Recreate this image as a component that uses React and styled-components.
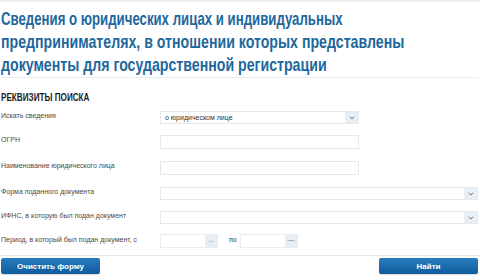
import React from "react";
import styled, { createGlobalStyle } from "styled-components";

const Global = createGlobalStyle`
  html, body { margin: 0; padding: 0; background: #fff; }
  body { width: 480px; height: 280px; overflow: hidden; font-family: "Liberation Sans", Arial, sans-serif; }
`;

const Page = styled.div`
  width: 480px;
  height: 280px;
  box-sizing: border-box;
  border-top: 2px solid #eef2f5;
  padding: 0 2px 0 1px;
  display: flex;
  flex-direction: column;
  overflow: hidden;
`;

const TitleBox = styled.div`
  padding: 5px 0 1px 0;
  border-bottom: 1px solid #e7edf1;
`;

const Condensed = styled.div`
  transform: scaleX(${(p) => p.$sx});
  transform-origin: left top;
  white-space: nowrap;
`;

const Title = styled.h1`
  margin: 0;
  font-family: "Liberation Sans", sans-serif;
  font-weight: 700;
  font-size: 19px;
  line-height: 23px;
  color: #1d679c;
`;

const Heading = styled.h2`
  margin: 13px 0 3px 0;
  font-family: "Liberation Sans", sans-serif;
  font-weight: 700;
  font-size: 11px;
  line-height: 12px;
  color: #1c1c1c;
`;

const Row = styled.div`
  display: flex;
  align-items: center;
  height: ${(p) => p.$h || 25}px;
`;

const Label = styled.div`
  width: 159px;
  flex: none;
  font-size: 7px;
  color: #4a4a4a;
  margin-top: -4px;
`;

const Field = styled.div`
  box-sizing: border-box;
  width: ${(p) => (p.$wide ? "318px" : "199px")};
  height: ${(p) => p.$h || 13}px;
  border: 1px solid #e4e9ee;
  background: #fff;
  display: flex;
  align-items: stretch;
  font-size: 7px;
  color: #333;
`;

const FieldText = styled.div`
  flex: 1;
  display: flex;
  align-items: center;
  padding-left: 4px;
`;

const ArrowBox = styled.div`
  width: 13px;
  flex: none;
  background: #e7eef4;
  display: flex;
  align-items: center;
  justify-content: center;
`;

const DateField = styled.div`
  box-sizing: border-box;
  width: 58px;
  height: 14px;
  border: 1px solid #e7ecf0;
  display: flex;
  justify-content: flex-end;
`;

const DotsBtn = styled.div`
  width: 12px;
  background: #e6edf3;
  color: #7a8a99;
  font-size: 7px;
  line-height: 10px;
  text-align: center;
  letter-spacing: -0.5px;
`;

const Po = styled.span`
  font-size: 7px;
  color: #333;
  margin: -4px 3px 0 11px;
`;

const Divider = styled.div`
  border-top: 1px solid #e3e8ec;
  margin: 2px -2px 0 -1px;
`;

const Buttons = styled.div`
  display: flex;
  justify-content: space-between;
  margin-top: 2px;
`;

const Button = styled.div`
  width: 99px;
  height: 16px;
  border-radius: 2px;
  background: linear-gradient(#2a7dc0, #0f5b9c);
  color: #fff;
  font-weight: 700;
  font-size: 8px;
  display: flex;
  align-items: center;
  justify-content: center;
  box-shadow: 0 1px 1px rgba(0,0,0,0.15);
`;

const Chevron = () => (
  <svg width="6" height="4" viewBox="0 0 6 4">
    <path d="M0.8 0.8 L3 3 L5.2 0.8" fill="none" stroke="#5b6f82" strokeWidth="0.9" />
  </svg>
);

const Select = ({ wide, value }) => (
  <Field $wide={wide}>
    <FieldText>{value}</FieldText>
    <ArrowBox>
      <Chevron />
    </ArrowBox>
  </Field>
);

export default function App() {
  return (
    <>
      <Global />
      <Page>
        <TitleBox>
          <Title>
            <Condensed $sx={0.695}>Сведения о юридических лицах и индивидуальных</Condensed>
            <Condensed $sx={0.745}>предпринимателях, в отношении которых представлены</Condensed>
            <Condensed $sx={0.745}>документы для государственной регистрации</Condensed>
          </Title>
        </TitleBox>
        <Condensed $sx={0.74}>
          <Heading>РЕКВИЗИТЫ ПОИСКА</Heading>
        </Condensed>
        <Row $h={23}>
          <Label>Искать сведения</Label>
          <Select value="о юридическом лице" />
        </Row>
        <Row $h={25}>
          <Label>ОГРН</Label>
          <Field $h={14} />
        </Row>
        <Row $h={27}>
          <Label>Наименование юридического лица</Label>
          <Field $h={14} />
        </Row>
        <Row $h={25}>
          <Label>Форма поданного документа</Label>
          <Select wide $h={14} />
        </Row>
        <Row $h={23}>
          <Label>ИФНС, в которую был подан документ</Label>
          <Select wide />
        </Row>
        <Row $h={24}>
          <Label>Период, в который был подан документ, с</Label>
          <DateField>
            <DotsBtn>...</DotsBtn>
          </DateField>
          <Po>по</Po>
          <DateField>
            <DotsBtn>—</DotsBtn>
          </DateField>
        </Row>
        <Divider />
        <Buttons>
          <Button>Очистить форму</Button>
          <Button>Найти</Button>
        </Buttons>
      </Page>
    </>
  );
}
